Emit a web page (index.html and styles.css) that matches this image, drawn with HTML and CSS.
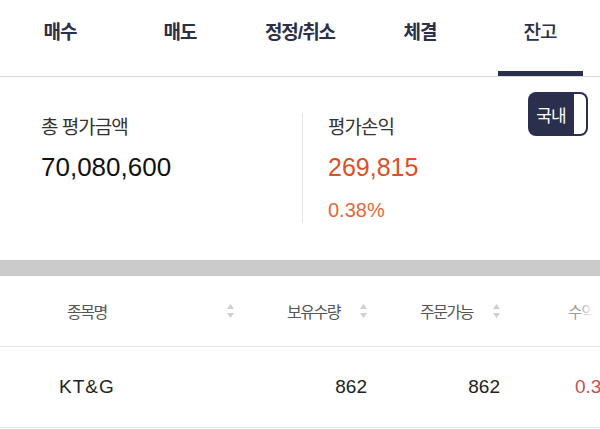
FILE: index.html
```html
<!DOCTYPE html>
<html lang="ko">
  <head>
    <meta charset="UTF-8" />
    <meta name="viewport" content="width=device-width, initial-scale=1.0" />
    <title>잔고</title>
    <link rel="stylesheet" href="styles.css">
  </head>
  <body>
    <div class="page">
      <nav class="tabs">
        <a class="tab">매수</a>
        <a class="tab">매도</a>
        <a class="tab">정정/취소</a>
        <a class="tab">체결</a>
        <a class="tab active">잔고</a>
      </nav>

      <section class="summary">
        <div class="sum-col sum-left">
          <div class="sum-label">총 평가금액</div>
          <div class="sum-value">70,080,600</div>
        </div>
        <div class="sum-col sum-right">
          <div class="sum-label">평가손익</div>
          <div class="sum-value profit">269,815</div>
          <div class="sum-rate">0.38%</div>
        </div>
        <div class="market-toggle">
          <span class="toggle-on">국내</span>
          <span class="toggle-off"></span>
        </div>
      </section>

      <div class="divider-band"></div>

      <div class="holdings">
        <div class="h-row h-head">
          <div class="cell c-name">
            <span class="head-text">종목명</span>
            <svg class="sort" width="7" height="14" viewBox="0 0 7 14"><path d="M3.5 0 L7 5 L0 5 Z M0 9 L7 9 L3.5 14 Z" fill="#cfcfcf"/></svg>
          </div>
          <div class="cell c-num">
            <span class="head-text">보유수량</span>
            <svg class="sort" width="7" height="14" viewBox="0 0 7 14"><path d="M3.5 0 L7 5 L0 5 Z M0 9 L7 9 L3.5 14 Z" fill="#cfcfcf"/></svg>
          </div>
          <div class="cell c-num">
            <span class="head-text">주문가능</span>
            <svg class="sort" width="7" height="14" viewBox="0 0 7 14"><path d="M3.5 0 L7 5 L0 5 Z M0 9 L7 9 L3.5 14 Z" fill="#cfcfcf"/></svg>
          </div>
          <div class="cell c-rate fade">
            <span class="head-text muted">수익률</span>
          </div>
        </div>
        <div class="h-row h-item">
          <div class="cell c-name item-name">KT&amp;G</div>
          <div class="cell c-num item-num">862</div>
          <div class="cell c-num item-num">862</div>
          <div class="cell c-rate item-rate">0.38%</div>
        </div>
      </div>
    </div>
  </body>
</html>
```

FILE: styles.css
```css
body {
  margin: 0;
  padding: 0;
  font-family: "Liberation Sans", "Noto Sans CJK KR", sans-serif;
  background-color: #fff;
  color: #222;
}

.page {
  width: 600px;
  height: 429px;
  overflow: hidden;
}

/* tabs */
.tabs {
  display: flex;
  height: 76px;
  border-bottom: 1px solid #d9d9d9;
}

.tab {
  flex: 1;
  display: flex;
  flex-direction: column;
  align-items: center;
  padding-top: 21px;
  box-sizing: border-box;
  font-size: 19px;
  line-height: 24px;
  font-weight: bold;
  letter-spacing: -1px;
  color: #2c2f48;
}

.tab.active {
  font-weight: 500;
}

.tab.active::after {
  content: "";
  display: block;
  width: 85px;
  height: 5px;
  margin-top: auto;
  background-color: #2b2f4e;
}

/* summary */
.summary {
  display: flex;
  align-items: flex-start;
  height: 183px;
  padding-top: 15px;
  box-sizing: border-box;
}

.sum-col {
  margin-top: 21px;
  padding-top: 3px;
  box-sizing: border-box;
}

.sum-left {
  width: 302px;
  padding-left: 41px;
}

.sum-right {
  height: 110px;
  border-left: 1px solid #e6e6e6;
  padding-left: 25px;
}

.sum-label {
  font-size: 19px;
  line-height: 24px;
  letter-spacing: -1px;
  color: #333;
}

.sum-value {
  margin-top: 12px;
  font-size: 26px;
  line-height: 30px;
  color: #111;
}

.sum-value.profit {
  font-size: 25px;
  color: #de4f22;
}

.sum-rate {
  margin-top: 16px;
  font-size: 20px;
  line-height: 24px;
  color: #e06a3c;
}

.market-toggle {
  display: flex;
  margin-left: auto;
  margin-right: 12px;
  height: 44px;
}

.toggle-on {
  display: flex;
  align-items: center;
  justify-content: center;
  width: 46px;
  background-color: #2b2f4e;
  color: #fff;
  font-size: 17px;
  letter-spacing: -1px;
  border-radius: 8px 0 0 8px;
}

.toggle-off {
  width: 12px;
  border: 2px solid #2b2f4e;
  border-left: none;
  border-radius: 0 8px 8px 0;
}

.divider-band {
  height: 16px;
  background-color: #cbcbcb;
}

/* holdings table */
.h-row {
  display: grid;
  grid-template-columns: 245px 133px 133px 1fr;
  border-bottom: 1px solid #e8e8e8;
}

.h-head {
  height: 71px;
  box-sizing: border-box;
}

.h-item {
  height: 80px;
}

.cell {
  display: flex;
  align-items: center;
  white-space: nowrap;
  overflow: hidden;
}

.h-head .c-name {
  padding-left: 67px;
  padding-right: 11px;
  justify-content: space-between;
}

.h-head .c-num {
  justify-content: flex-end;
  gap: 20px;
  padding-right: 11px;
}

.head-text {
  font-size: 16px;
  letter-spacing: -1.5px;
  color: #555;
}

.head-text.muted {
  color: #9a9a9a;
}

.c-rate {
  padding-left: 57px;
  position: relative;
}

.fade::after {
  content: "";
  position: absolute;
  top: 0;
  right: 0;
  bottom: 0;
  width: 22px;
  background: linear-gradient(to right, rgba(255, 255, 255, 0), #fff 70%);
}

.item-name {
  padding-left: 59px;
  font-size: 19px;
  letter-spacing: 1px;
  color: #222;
}

.h-item .c-num {
  justify-content: flex-end;
  padding-right: 11px;
  font-size: 19px;
  color: #222;
}

.item-rate {
  padding-left: 64px;
  font-size: 19px;
  color: #c9504c;
}
```
